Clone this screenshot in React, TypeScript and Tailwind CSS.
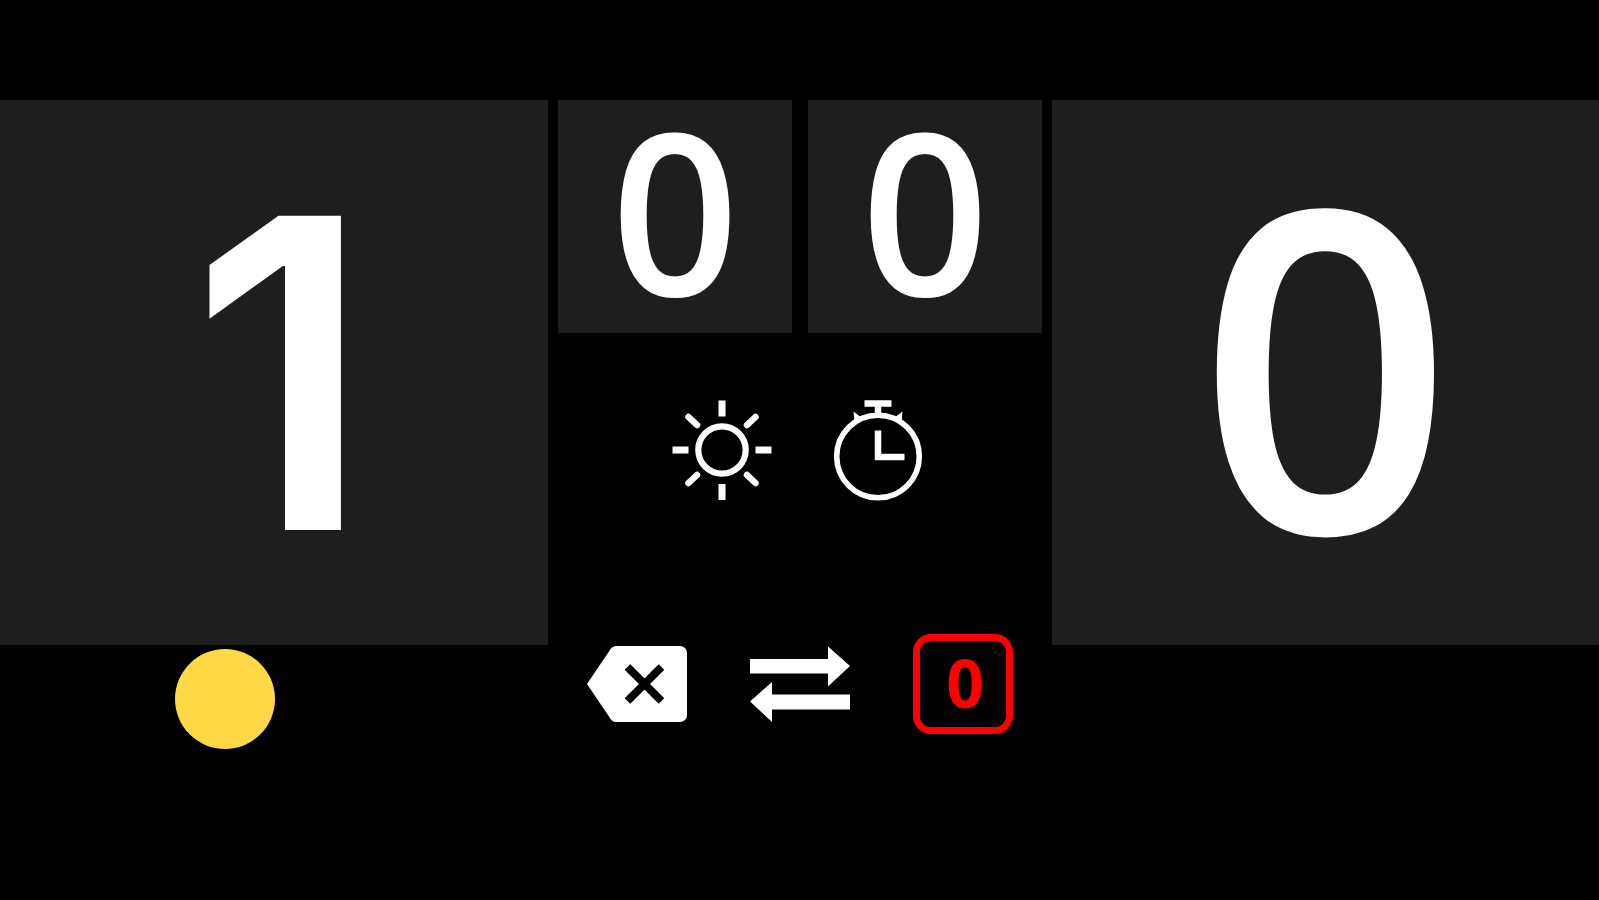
import { useState } from "react";

function SunIcon() {
  return (
    <svg viewBox="0 0 100 100" className="size-[100px] overflow-visible" fill="none" stroke="currentColor" strokeWidth="7" aria-hidden="true">
      <circle cx="50" cy="50" r="23.7" strokeWidth="6.2" />
      <path d="M50 0.500v16M50 84v16M0.500 50h16M83.500 50h16" />
      <path d="M16.500 17l8.500 8M83.500 17l-8.500 8M16.500 83l8.500-8M83.500 83l-8.500-8" strokeLinecap="round" strokeWidth="6.5" />
    </svg>
  );
}

function StopwatchIcon() {
  return (
    <svg viewBox="0 0 100 100" className="size-[100px] overflow-visible" fill="none" stroke="currentColor" strokeWidth="6" aria-hidden="true">
      <circle cx="50" cy="56.5" r="41.3" strokeWidth="5.6" />
      <path d="M36.500 3.500h27M50 3.500v12" strokeWidth="6.5" />
      <path d="M50 30.500v26.500h26.500" strokeWidth="6.5" />
      <path d="M25.500 11.500l8.500 6.500-7.500 5zM74.500 11.500l-8.500 6.500 7.500 5z" fill="currentColor" stroke="none" />
    </svg>
  );
}

function BackspaceIcon() {
  return (
    <svg viewBox="0 0 100 100" className="size-[100px]" aria-hidden="true">
      <path
        d="M29 12H93a7 7 0 0 1 7 7V81a7 7 0 0 1-7 7H29a6 6 0 0 1-5-2.500L0 50 24 14.500a6 6 0 0 1 5-2.500z"
        fill="currentColor"
      />
      <path d="M40.500 33l34 34M74.500 33l-34 34" stroke="#000" strokeWidth="8" />
    </svg>
  );
}

function SwapIcon() {
  return (
    <svg viewBox="0 0 100 100" className="size-[100px]" fill="currentColor" aria-hidden="true">
      <path d="M0 25H78V12.500L100 32 78 52.500V39.500H0z" />
      <path d="M100 60.500H22V48L0 67.500 22 88V75.500H100z" />
    </svg>
  );
}

export default function App() {
  const [score, setScore] = useState({ left: 1, right: 0 });
  const [sets, setSets] = useState({ left: 0, right: 0 });

  return (
    <main className="min-h-screen bg-black pt-[100px] font-['Open_Sans',sans-serif] font-semibold text-white">
      <div className="grid grid-cols-[548fr_484fr_547fr] items-start gap-x-[10px]">
        <section>
          <button
            type="button"
            aria-label="Left score"
            onClick={() => setScore({ ...score, left: score.left + 1 })}
            className="flex h-[545px] w-full items-center justify-center bg-[#1e1e1e] pl-[14px] font-['Inter',sans-serif] text-[432px] leading-none"
          >
            {score.left}
          </button>
          <div className="mt-1 ml-[32%] size-[100px] rounded-full bg-[#ffd845]" />
        </section>

        <section>
          <div className="grid grid-cols-2 gap-4">
            <button
              type="button"
              aria-label="Left sets"
              onClick={() => setSets({ ...sets, left: sets.left + 1 })}
              className="flex h-[233px] items-center justify-center bg-[#1e1e1e] pb-[14px] text-[224px] leading-none"
            >
              {sets.left}
            </button>
            <button
              type="button"
              aria-label="Right sets"
              onClick={() => setSets({ ...sets, right: sets.right + 1 })}
              className="flex h-[233px] items-center justify-center bg-[#1e1e1e] pb-[14px] text-[224px] leading-none"
            >
              {sets.right}
            </button>
          </div>
          <div className="mt-[67px] flex justify-center gap-14">
            <button type="button" aria-label="Brightness">
              <SunIcon />
            </button>
            <button type="button" aria-label="Timer">
              <StopwatchIcon />
            </button>
          </div>
          <div className="mt-[134px] flex items-center justify-center gap-[63px]">
            <button type="button" aria-label="Undo">
              <BackspaceIcon />
            </button>
            <button type="button" aria-label="Swap sides" onClick={() => setScore({ left: score.right, right: score.left })}>
              <SwapIcon />
            </button>
            <button
              type="button"
              aria-label="Reset"
              onClick={() => setScore({ left: 0, right: 0 })}
              className="flex size-[100px] items-center justify-center rounded-[18px] border-[7px] border-[#ff0000] pb-1 pl-1 text-[66px] leading-none font-bold text-[#ff0000]"
            >
              0
            </button>
          </div>
        </section>

        <section>
          <button
            type="button"
            aria-label="Right score"
            onClick={() => setScore({ ...score, right: score.right + 1 })}
            className="flex h-[545px] w-full items-center justify-center bg-[#1e1e1e] pb-7 text-[448px] leading-none"
          >
            {score.right}
          </button>
        </section>
      </div>
    </main>
  );
}
